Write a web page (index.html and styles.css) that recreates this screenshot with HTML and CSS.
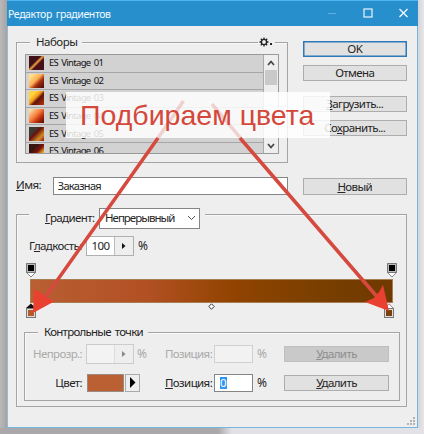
FILE: index.html
```html
<!DOCTYPE html>
<html lang="ru">
<head>
<meta charset="utf-8">
<title>Редактор градиентов</title>
<link rel="stylesheet" href="styles.css">
</head>
<body>
<main class="window">
  <header class="titlebar">
    <span class="title">Редактор градиентов</span>
    <svg class="controls" width="84" height="14" viewBox="0 0 84 14" fill="none">
      <path d="M3 7.5h8" stroke="#5fafe0"/>
      <rect x="39" y="3" width="8" height="8" stroke="#e9f5fd" stroke-width="1.2"/>
      <path d="M74.500 3l8 8m0-8l-8 8" stroke="#f4faff" stroke-width="1.300"/>
    </svg>
  </header>
  <div class="content">
    <div class="top">
      <section class="group presets">
        <span class="legend">Наборы</span>
        <span class="gear"><svg width="15" height="10" viewBox="0 0 15 10"><circle cx="5" cy="5" r="2.600" fill="none" stroke="#222" stroke-width="1.400"/><path d="M5 .5v1.500M5 8v1.500M.5 5H2M8 5h1.500M1.800 1.800l1 1M7.200 7.200l1 1M8.200 1.800l-1 1M2.800 7.200l-1 1" stroke="#222" stroke-width="1.300"/><rect x="11" y="6" width="2" height="2" fill="#222"/></svg></span>
        <div class="list">
          <div class="rows">
            <div class="row"><i class="sw s1"></i><span>ES Vintage 01</span></div>
            <div class="row"><i class="sw s2"></i><span>ES Vintage 02</span></div>
            <div class="row"><i class="sw s3"></i><span>ES Vintage 03</span></div>
            <div class="row"><i class="sw s4"></i><span>ES Vintage 04</span></div>
            <div class="row"><i class="sw s5"></i><span>ES Vintage 05</span></div>
            <div class="row"><i class="sw s6"></i><span>ES Vintage 06</span></div>
          </div>
          <div class="scroll">
            <svg width="14" height="15" viewBox="0 0 14 15"><path d="M4 10l3-3.500 3 3.500" fill="none" stroke="#444" stroke-width="1.700"/></svg>
            <i class="thumb"></i>
            <svg class="down" width="14" height="15" viewBox="0 0 14 15"><path d="M4 6l3 3.500 3-3.500" fill="none" stroke="#444" stroke-width="1.700"/></svg>
          </div>
        </div>
      </section>
      <div class="actions">
        <div class="btn primary"><span>OK</span></div>
        <div class="btn"><span>Отмена</span></div>
        <div class="btn load"><span><u>З</u>агрузить...</span></div>
        <div class="btn"><span>Со<u>х</u>ранить...</span></div>
      </div>
    </div>
    <div class="namerow">
      <span class="label namelabel"><u>И</u>мя:</span>
      <div class="field name">Заказная</div>
      <div class="btn new"><span><u>Н</u>овый</span></div>
    </div>
    <section class="group editor">
      <div class="type">
        <span class="label"><u>Г</u>радиент:</span>
        <div class="select"><span>Непрерывный</span><svg width="9" height="6" viewBox="0 0 9 6"><path d="M1 1l3.500 3.500L8 1" fill="none" stroke="#555"/></svg></div>
      </div>
      <div class="smooth">
        <span class="label">Г<u>л</u>адкость:</span>
        <div class="spin"><span>100</span><b><svg width="4" height="6" viewBox="0 0 4 6"><path d="M0 0l3.500 3L0 6z" fill="#111"/></svg></b></div>
        <span class="label big">%</span>
      </div>
      <div class="ramp">
        <div class="stops">
          <svg width="11" height="16" viewBox="0 0 11 16"><path d="M.5.500h9v9L5 14 .5 9.500z" fill="#fff" stroke="#888"/><path d="M.5 9.500V.5h9v9z" fill="#bbb" stroke="#777"/><rect x="2" y="2" width="6" height="6" fill="#000"/></svg>
          <svg width="11" height="16" viewBox="0 0 11 16"><path d="M.5.500h9v9L5 14 .5 9.500z" fill="#fff" stroke="#888"/><path d="M.5 9.500V.5h9v9z" fill="#bbb" stroke="#777"/><rect x="2" y="2" width="6" height="6" fill="#000"/></svg>
        </div>
        <div class="bar"></div>
        <div class="stops lower">
          <svg width="11" height="16" viewBox="0 0 11 16"><path d="M0 5L5 .5 9.500 5z" fill="#111"/><rect x=".5" y="5.500" width="9" height="9" fill="#ddd" stroke="#777"/><rect x="2" y="7" width="6" height="6" fill="#b45a2b"/></svg>
          <svg class="mid" width="7" height="7" viewBox="0 0 7 7"><path d="M3.500.800l2.700 2.700-2.700 2.700L.8 3.500z" fill="#fff" stroke="#333"/></svg>
          <svg class="last" width="11" height="16" viewBox="0 0 11 16"><path d="M.5 5.500L5 .8l4.500 4.700z" fill="#fff" stroke="#888"/><rect x=".5" y="5.500" width="9" height="9" fill="#ddd" stroke="#777"/><rect x="2" y="7" width="6" height="6" fill="#7d4008"/></svg>
        </div>
      </div>
      <section class="group points">
        <span class="legend">Контрольные точки</span>
        <div class="prow off">
          <span class="label first">Непрозр.:</span>
          <div class="spin"><span></span><b><svg width="4" height="6" viewBox="0 0 4 6"><path d="M0 0l3.500 3L0 6z" fill="#888"/></svg></b></div>
          <span class="label pct big">%</span>
          <span class="label pos">Позиция:</span>
          <div class="field num"></div>
          <span class="label pct2 big">%</span>
          <div class="btn"><span><u>У</u>далить</span></div>
        </div>
        <div class="prow">
          <span class="label first">Цвет:</span>
          <div class="color"><i></i><b><svg width="6" height="11" viewBox="0 0 6 11"><path d="M0 0l5.500 5.500L0 11z" fill="#000"/></svg></b></div>
          <span class="label pos"><u>П</u>озиция:</span>
          <div class="field num"><mark>0</mark></div>
          <span class="label pct2 big">%</span>
          <div class="btn"><span><u>У</u>далить</span></div>
        </div>
      </section>
    </section>
  </div>
  <svg class="grip" width="8" height="8" viewBox="0 0 8 8" fill="#b4b4b4"><path d="M6 0h2v2H6zM3 3h2v2H3zM6 3h2v2H6zM0 6h2v2H0zM3 6h2v2H3zM6 6h2v2H6z"/></svg>
</main>
<div class="note"><span>Подбираем цвета</span></div>
<svg class="arrows" width="424" height="434" viewBox="0 0 424 434">
  <g stroke="#d5493f" stroke-width="3.500">
    <path d="M183.500 101L158 138M212 104l28.500 34" opacity=".22"/>
    <path d="M158 138L44 299M240 138L379 299"/>
  </g>
  <path d="M33 313l1-24 7 4 6 5 8 3zM389 311l-24-9 9-4 5-6 4-7z" fill="#ea4030"/>
</svg>
</body>
</html>
```
FILE: styles.css
```css
* { box-sizing: border-box; }
body {
  margin: 0; width: 424px; height: 434px; overflow: hidden; position: relative;
  padding-left: 7px;
  font: 11.500px/16px "Noto Sans", "Open Sans", sans-serif; letter-spacing: -.6px; word-spacing: 1.500px; color: #252525;
  background:
    linear-gradient(90deg, #aaa8aa 0 218px, #e2e2e6 232px) 0 428px / 100% 6px no-repeat,
    linear-gradient(90deg, #b9b9b9, #a4a4a6 7px, #d2d3d6 417px, #e6e6ea 424px);
}
.window { position: relative; width: 411px; height: 428px; background: #eee; border: 1px solid #72b7e2; border-left-color: #9ab9cd; border-top: 0; }
.titlebar { height: 26px; margin: 0 -1px; background: #288fcd; border-top: 1px solid #50b4ee; display: flex; align-items: center; justify-content: space-between; padding: 0 9px 0 1px; }
.title { color: #f3faff; font-size: 10.500px; letter-spacing: -.4px; white-space: nowrap; }
.controls { margin-top: -2px; }
.content { padding: 15px 10px 0 8px; }
.top { display: flex; gap: 15px; }
.group { border: 1px solid #a4a4a4; position: relative; box-shadow: inset 1px 1px #f8f8f8; }
.legend { position: absolute; top: -9px; left: 13px; padding: 0 5px 0 6px; background: #eee; white-space: nowrap; letter-spacing: -.75px; }
.presets { width: 273px; height: 121px; margin-top: 1px; padding: 11px 8px 8px; }
.presets .legend { letter-spacing: -.5px; }
.gear { position: absolute; right: 12px; top: -7px; background: #eee; height: 11px; width: 17px; line-height: 0; padding: 1px 0 0 1px; }
.list { height: 100px; border: 1px solid #999; display: flex; overflow: hidden; background: #d2d2d2; }
.rows { flex: 1; }
.row { height: 17.600px; border-bottom: 1px solid #a6a6a6; display: flex; align-items: center; gap: 5px; padding-left: 3px; font-size: 9.500px; letter-spacing: -.7px; color: #111; }
.sw { width: 15px; height: 14px; flex: none; }
.s1 { background: linear-gradient(135deg, #40101b 43%, #f8a63b 50%, #481018 58%); }
.s2 { background: linear-gradient(135deg, #ffdf8c 15%, #ffae53 45%, #a22c10 65%, #410b08); }
.s3 { background: linear-gradient(135deg, #ffd43b 25%, #f3981e 45%, #61130a 60%, #b53612); }
.s4 { background: linear-gradient(135deg, #fff0b4, #f57d3d 45%, #b92b0a 70%, #491006); }
.s5 { background: linear-gradient(135deg, #3d3932 30%, #68120d 45%, #d58c24 75%, #811); }
.s6 { background: linear-gradient(135deg, #35150d 30%, #7f130c 55%, #e4a128 75%); }
.s1 { background: linear-gradient(135deg, #40101b 40%, #f8a63b 50%, #481018 60%); }
.scroll { width: 15px; background: #eee; border-left: 1px solid #aaa; display: flex; flex-direction: column; }
.thumb { height: 15px; margin: 0 1px; background: #c9c9c9; }
.down { margin-top: auto; }
.actions { width: 105px; display: flex; flex-direction: column; gap: 8px; }
.btn { height: 16px; border: 1px solid #adadad; background: #e1e1e1; display: flex; align-items: center; justify-content: center; white-space: nowrap; }
.primary { border-color: #2c78b8; box-shadow: inset 0 0 0 .5px #2c78b8; }
.load { margin-top: 7px; }
u { text-decoration-thickness: 1px; text-underline-offset: 1px; }
.namerow { display: flex; height: 18px; margin-top: 14px; }
.label { white-space: nowrap; }
.namelabel { width: 37px; letter-spacing: -.55px; }
.field { border: 1px solid #858585; background: #fff; }
.name { width: 236px; padding-left: 4px; font-size: 11px; letter-spacing: -.7px; }
.new { width: 105px; height: 17px; margin: 1px 0 0 15px; }
.editor { width: 391px; height: 193px; margin-top: 19px; padding: 0 7px; }
.type { display: flex; align-items: center; width: 176px; height: 22px; margin: -8px 0 0 5px; padding-left: 16px; background: #eee; gap: 4px; position: relative; }
.type .label { width: 50px; }
.select { width: 101px; height: 21px; flex: none; border: 1px solid #858585; background: #fff; display: flex; align-items: center; justify-content: space-between; padding: 0 3px 0 5px; letter-spacing: -1px; }
.smooth { display: flex; align-items: center; height: 20px; margin: 7px 0 0 5px; gap: 4px; }
.smooth .label:first-child { width: 53px; }
.big { font-size: 12px; }
.spin { width: 48px; height: 20px; display: flex; flex: none; border: 1px solid #b0b0b0; background: #fff; align-items: stretch; }
.spin span { width: 27px; text-align: center; line-height: 18px; letter-spacing: -.5px; }
.spin b { flex: 1; border-left: 1px solid #bbb; background: #eee; display: flex; align-items: center; justify-content: center; }
.ramp { margin: 7px 0 0 2px; width: 372px; }
.stops { display: flex; justify-content: space-between; height: 16px; align-items: flex-start; }
.bar { height: 24px; width: 363px; margin-left: 4px; border: 1px solid #a67e52; background: linear-gradient(90deg, #b85f33, #b25023 32%, #914300 56%, #7c4000 76%, #6f3900); }
.lower { height: 16px; margin-top: 0; }
.mid { margin: 0 0 0 1px; }
.last { margin-right: 3px; }
.points { width: 376px; height: 69px; margin-top: 13px; padding: 11px 10px 0 8px; }
.prow { display: flex; align-items: center; height: 20px; }
.prow + .prow { margin-top: 9px; height: 19px; }
.first { width: 53px; }
.prow:not(.off) .first { text-align: right; padding-right: 4px; }
.pct { width: 31px; padding-left: 3px; }
.pos { width: 49px; }
.num { width: 39px; height: 18px; padding: 0 0 0 5px; }
.pct2 { width: 31px; padding-left: 4px; }
.prow .btn { width: 105px; }
.off { color: #aaa; }
.off .spin { background: #f3f3f3; border-color: #ccc; }
.off .spin b { border-color: #ddd; }
.off .field { background: #f2f2f2; border-color: #d0d0d0; }
.off .btn { background: #c9c9c9; border-color: #bfbfbf; color: #8d8d8d; }
.color { display: flex; width: 79px; gap: 1px; padding-left: 1px; }
.color i { width: 37px; height: 18px; background: #bb6032; border: 1px solid #9b8a82; }
.color b { width: 15px; height: 18px; border: 1px solid #aaa; display: flex; align-items: center; justify-content: center; }
mark { background: #3295f5; color: #fff; display: block; width: 7px; height: 12px; line-height: 12px; margin-top: 2px; }
.grip { position: absolute; right: 2px; bottom: 2px; }
.note { position: absolute; left: 66px; top: 92px; width: 264px; height: 46px; background: rgba(255,255,255,.84); color: #d4473b; font: 28.500px/46px "Liberation Sans", Arial, sans-serif; letter-spacing: 0; word-spacing: 0; white-space: nowrap; padding-left: 14px; }
.arrows { position: absolute; left: 0; top: 0; pointer-events: none; }
```
